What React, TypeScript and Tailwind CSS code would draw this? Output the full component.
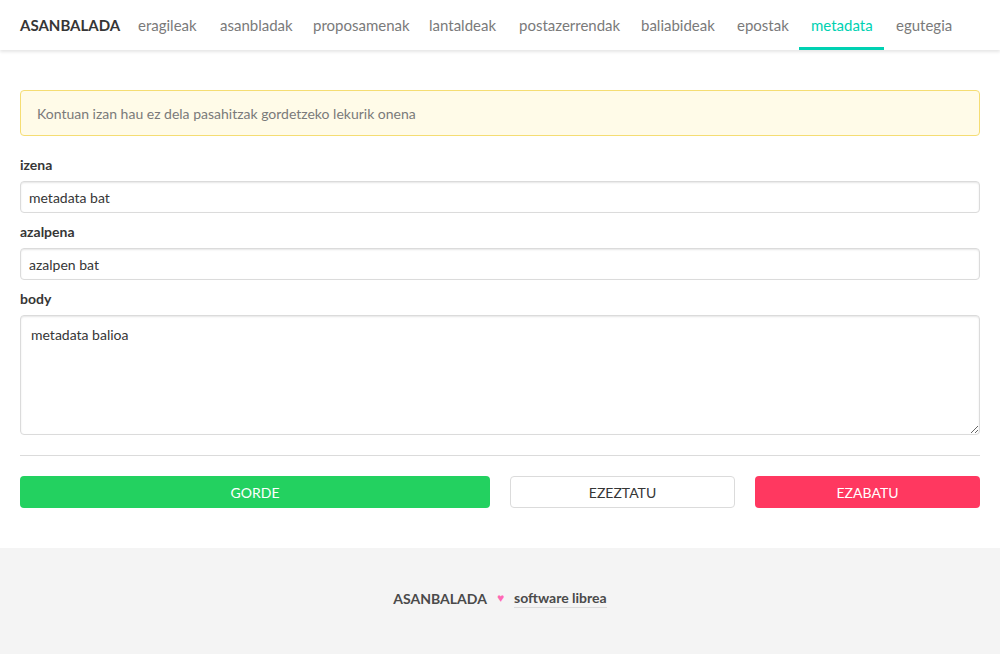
import React from "react";

const navItems = [
  { name: "eragileak", w: "w-[82px]" },
  { name: "asanbladak", w: "w-[93px]" },
  { name: "proposamenak", w: "w-[116px]" },
  { name: "lantaldeak", w: "w-[90px]" },
  { name: "postazerrendak", w: "w-[122px]" },
  { name: "baliabideak", w: "w-[96px]" },
  { name: "epostak", w: "w-[74px]" },
  { name: "metadata", w: "w-[85px]", active: true },
  { name: "egutegia", w: "w-[70px]" },
];

const fieldClass =
  "w-full h-[32px] px-[8px] rounded-[4px] border border-[#dbdbdb] bg-white text-[14px] text-[#363636] shadow-[inset_0_1px_2px_rgba(10,10,10,0.1)] outline-none";

const App = () => {
  return (
    <div className="min-h-[654px] bg-white flex flex-col font-['Lato','Noto_Sans',sans-serif] text-[#4a4a4a]">
      {/* Navbar */}
      <nav className="h-[50px] bg-white shadow-[0_2px_3px_rgba(10,10,10,0.1)] flex items-stretch pl-[20px] relative z-10">
        <a href="#" className="w-[106px] flex items-center text-[15px] font-bold text-[#363636]">
          ASANBALADA
        </a>
        {navItems.map((item) => (
          <a
            key={item.name}
            href="#"
            className={`${item.w} flex items-center pl-[12px] text-[15px] border-b-[3px] pt-[3px] ${
              item.active ? "text-[#00d1b2] border-[#00d1b2]" : "text-[#7a7a7a] border-transparent"
            }`}
          >
            {item.name}
          </a>
        ))}
      </nav>

      {/* Main */}
      <main className="px-[20px] pt-[40px] pb-[40px]">
        <div className="h-[46px] flex items-center px-[16px] rounded-[4px] border border-[#f5dd73] bg-[#fffbe8] text-[14px] text-[#7a7a7a]">
          Kontuan izan hau ez dela pasahitzak gordetzeko lekurik onena
        </div>

        <form className="mt-[19px]" onSubmit={(e) => e.preventDefault()}>
          <label className="block text-[14px] font-bold text-[#363636] leading-[20px]">izena</label>
          <input className={`${fieldClass} mt-[6px]`} defaultValue="metadata bat" />

          <label className="block text-[14px] font-bold text-[#363636] leading-[20px] mt-[9px]">azalpena</label>
          <input className={`${fieldClass} mt-[6px]`} defaultValue="azalpen bat" />

          <label className="block text-[14px] font-bold text-[#363636] leading-[20px] mt-[9px]">body</label>
          <textarea
            className="block w-full h-[120px] mt-[6px] px-[10px] py-[8px] rounded-[4px] border border-[#dbdbdb] bg-white text-[14px] text-[#363636] shadow-[inset_0_1px_2px_rgba(10,10,10,0.1)] outline-none resize-y"
            defaultValue="metadata balioa"
          />

          <hr className="mt-[20px] border-0 border-t border-[#dbdbdb]" />

          <div className="mt-[20px] flex gap-[20px]">
            <button className="w-[470px] h-[32px] rounded-[4px] bg-[#23d160] text-white text-[14px]">GORDE</button>
            <button className="w-[225px] h-[32px] rounded-[4px] bg-white border border-[#dbdbdb] text-[#363636] text-[14px]">
              EZEZTATU
            </button>
            <button className="w-[225px] h-[32px] rounded-[4px] bg-[#ff3860] text-white text-[14px]">EZABATU</button>
          </div>
        </form>
      </main>

      {/* Footer */}
      <footer className="flex-1 bg-[#f4f4f4] flex items-center justify-center min-h-[106px] pb-[6px]">
        <div className="flex items-center gap-[10px] text-[14px] font-bold text-[#4a4a4a]">
          <span>ASANBALADA</span>
          <span className="text-[#ff69b4] text-[12px]">♥</span>
          <a href="#" className="border-b border-[#dbdbdb] leading-[18px]">software librea</a>
        </div>
      </footer>
    </div>
  );
};

export default App;
